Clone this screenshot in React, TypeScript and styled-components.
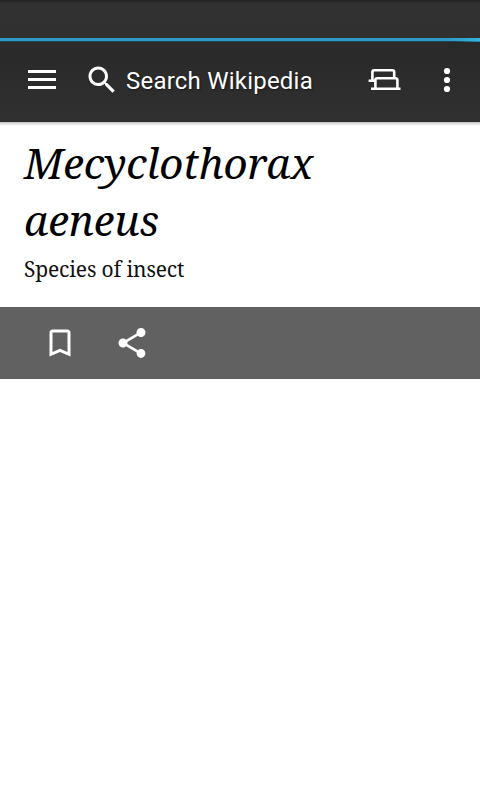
import React from "react";
import styled, { createGlobalStyle } from "styled-components";

const GlobalStyle = createGlobalStyle`
  * { box-sizing: border-box; }
  body { margin: 0; background: #fff; overflow: hidden; }
`;

const Screen = styled.div`
  width: 480px;
  height: 800px;
  display: flex;
  flex-direction: column;
  background: #fff;
`;

const StatusBar = styled.div`
  height: 38px;
  background: linear-gradient(#222 0, #2c2c2c 2px, #323232 5px, #303030 100%);
`;

const Progress = styled.div`
  height: 4px;
  background:
    linear-gradient(90deg, transparent 445px, #33b5e5 480px) 0 0 / 100% 3px no-repeat,
    linear-gradient(90deg, transparent 455px, #2a8fb5 480px),
    linear-gradient(#2f98c2 0 3px, #1d4658 3px 4px);
`;

const Toolbar = styled.header`
  height: 80px;
  padding-bottom: 4px;
  display: flex;
  align-items: center;
  background: linear-gradient(#292929, #303030);
`;

const Shadow = styled.div`
  height: 4px;
  background: linear-gradient(#bdbdbd, #dedede 40%, #fff);
`;

const Icon = styled.svg<{ $w: number; $h: number; $left?: number }>`
  display: block;
  flex: none;
  width: ${(p) => p.$w}px;
  height: ${(p) => p.$h}px;
  margin-left: ${(p) => p.$left ?? 0}px;
`;

const SearchLabel = styled.span`
  flex: none;
  width: 200px;
  margin-left: 6px;
  padding-top: 2px;
  font: 400 24px/30px Roboto, sans-serif;
  letter-spacing: 0.22px;
  color: #fff;
  white-space: nowrap;
  text-shadow: 1px 1px 2px rgba(0, 0, 0, 0.5);
`;

const Heading = styled.section`
  height: 181px;
  padding: 8px 24px 0;
  color: #000;
  font-family: "Noto Serif", "Droid Serif", "Liberation Serif", serif;
`;

const Title = styled.h1`
  margin: 0;
  width: 300px;
  font-size: 42px;
  font-style: italic;
  font-weight: 400;
  line-height: 57px;
  letter-spacing: -0.12px;
`;

const Description = styled.p`
  margin: 7px 0 0;
  font-size: 21px;
  line-height: 28px;
  letter-spacing: -0.15px;
  color: #111;
`;

const Actions = styled.div`
  height: 72px;
  display: flex;
  align-items: center;
  background: #616161;
`;

export default function App() {
  return (
    <>
      <GlobalStyle />
      <Screen>
        <StatusBar />
        <Progress />
        <Toolbar>
          <Icon $w={28} $h={20} $left={28} viewBox="0 0 28 20" fill="#fff">
            <path d="M0 0h28v3H0zM0 8h28v3H0zM0 16h28v3H0z" />
          </Icon>
          <Icon $w={36} $h={36} $left={28} viewBox="0 0 24 24" fill="#fff">
            <path d="M15.5 14h-.79l-.28-.27C15.41 12.59 16 11.11 16 9.5 16 5.91 13.09 3 9.5 3S3 5.91 3 9.5 5.91 16 9.5 16c1.61 0 3.09-.59 4.23-1.57l.27.28v.79l5 4.99L20.49 19l-4.99-5zm-6 0C7.01 14 5 11.99 5 9.5S7.01 5 9.5 5 14 7.01 14 9.5 11.99 14 9.5 14z" />
          </Icon>
          <SearchLabel>Search Wikipedia</SearchLabel>
          <Icon $w={36} $h={36} $left={40} viewBox="366 62 36 36" fill="none" stroke="#fff" strokeWidth="2.6">
            <path d="M372.4 80v-8q0-1.8 1.8-1.8h18.2q1.8 0 1.8 1.8v6M368.6 80.8h6.5M375.4 88.5V80q0-1.8 1.8-1.8h18.4q1.8 0 1.8 1.8v8.5M371 88.7h29.5" />
          </Icon>
          <Icon $w={8} $h={26} $left={41} viewBox="0 0 8 26" fill="#fff">
            <circle cx="4" cy="4" r="3.1" />
            <circle cx="4" cy="13" r="3.1" />
            <circle cx="4" cy="22" r="3.1" />
          </Icon>
        </Toolbar>
        <Shadow />
        <Heading>
          <Title>Mecyclothorax aeneus</Title>
          <Description>Species of insect</Description>
        </Heading>
        <Actions>
          <Icon $w={36} $h={36} $left={42} viewBox="0 0 24 24" fill="#fff">
            <path d="M17 3H7c-1.1 0-1.99.9-1.99 2L5 21l7-3 7 3V5c0-1.1-.9-2-2-2zm0 15l-5-2.18L7 18V5h10v13z" />
          </Icon>
          <Icon $w={36} $h={36} $left={36} viewBox="0 0 24 24" fill="#fff">
            <path d="M18 16.08c-.76 0-1.44.3-1.96.77L8.91 12.7c.05-.23.09-.46.09-.7s-.04-.47-.09-.7l7.05-4.11c.54.5 1.25.81 2.04.81 1.66 0 3-1.34 3-3s-1.34-3-3-3-3 1.34-3 3c0 .24.04.47.09.7L8.04 9.81C7.5 9.31 6.79 9 6 9c-1.66 0-3 1.34-3 3s1.34 3 3 3c.79 0 1.5-.31 2.04-.81l7.12 4.16c-.05.21-.08.43-.08.65 0 1.61 1.31 2.92 2.92 2.92 1.61 0 2.92-1.31 2.92-2.92s-1.31-2.92-2.92-2.92z" />
          </Icon>
        </Actions>
      </Screen>
    </>
  );
}
